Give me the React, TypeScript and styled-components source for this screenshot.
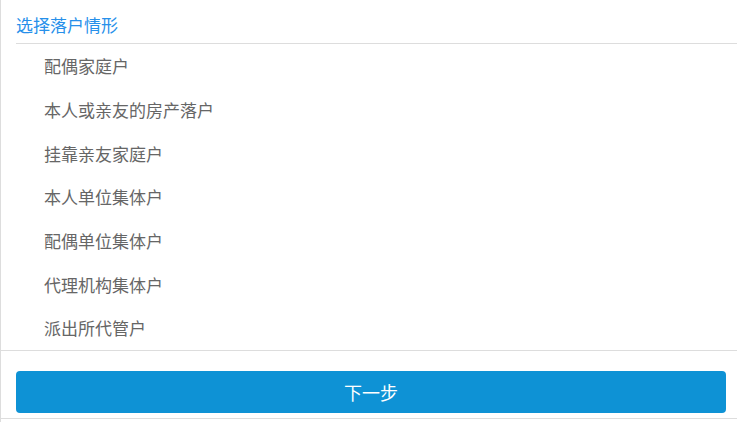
import React from 'react';
import styled, {createGlobalStyle} from 'styled-components';

const GlobalStyle = createGlobalStyle`
  html, body {
    margin: 0;
    padding: 0;
    background: #fff;
    font-family: "Noto Sans CJK SC", "Liberation Sans", sans-serif;
  }
`

const Wrapper = styled.div`
  width: 737px;
  height: 422px;
  box-sizing: border-box;
  border-left: 1px solid #ddd;
  background: #fff;
`

const Title = styled.div`
  margin-left: 15px;
  height: 44px;
  box-sizing: border-box;
  padding-top: 6px;
  display: flex;
  align-items: center;
  border-bottom: 1px solid #ddd;
  font-size: 17px;
  color: #2790ea;
`

const OptionList = styled.ul`
  list-style: none;
  margin: 0;
  padding: 0;
  border-bottom: 1px solid #ddd;
`

const Option = styled.li`
  height: 43.7px;
  display: flex;
  align-items: center;
  padding-left: 43px;
  font-size: 17px;
  color: #666;
  cursor: pointer;
`

const Footer = styled.div`
  padding: 20px 11px 5px 15px;
  border-bottom: 1px solid #ddd;
`

const NextButton = styled.button`
  display: block;
  width: 100%;
  height: 42px;
  border: none;
  border-radius: 4px;
  background: #0e92d5;
  color: #fff;
  font-family: inherit;
  font-size: 18px;
  cursor: pointer;
`

const options = [
    '配偶家庭户',
    '本人或亲友的房产落户',
    '挂靠亲友家庭户',
    '本人单位集体户',
    '配偶单位集体户',
    '代理机构集体户',
    '派出所代管户',
]

const App: React.FC = () => {
    return <Wrapper>
        <GlobalStyle/>
        <Title>选择落户情形</Title>
        <OptionList>
            {options.map((label) => <Option key={label}>{label}</Option>)}
        </OptionList>
        <Footer>
            <NextButton type='button'>下一步</NextButton>
        </Footer>
    </Wrapper>
}
export default App
